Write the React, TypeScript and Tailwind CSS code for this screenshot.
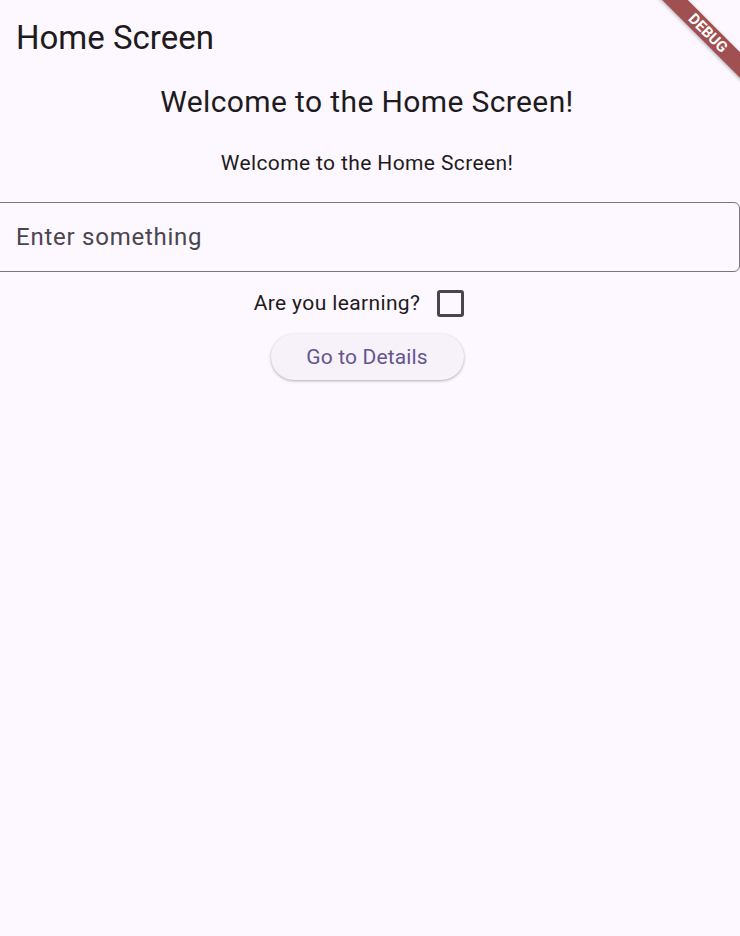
import React, { useState } from "react";

// flutter-style debug ribbon in the top right corner
const DebugBanner = () => (
  <div className="pointer-events-none absolute top-0 right-0 h-[100px] w-[100px] overflow-hidden">
    <div className="absolute top-[23.5px] left-[2.5px] flex h-[18px] w-[130px] rotate-45 items-center justify-center bg-[#a05050] shadow-[0_1px_4px_rgba(0,0,0,0.3)]">
      <span className="font-['Roboto',sans-serif] text-[15px] font-bold leading-none text-white">
        DEBUG
      </span>
    </div>
  </div>
);

export default function App() {
  const [learning, setLearning] = useState(false);
  const [value, setValue] = useState("");

  return (
    <div className="relative min-h-[936px] w-full overflow-hidden bg-[#fdf7ff] font-['Roboto',sans-serif] text-[#1d1b20]">
      <DebugBanner />
      <header className="flex h-[74px] items-center px-4">
        <h1 className="text-[33px] leading-none">Home Screen</h1>
      </header>

      <main className="flex flex-col items-center pr-[6px]">
        <p className="mt-[10px] text-[30px] leading-[36px] tracking-[0.375px]">
          Welcome to the Home Screen!
        </p>
        <p className="mt-[29px] text-[21px] leading-[28px] tracking-[0.375px]">
          Welcome to the Home Screen!
        </p>

        <div className="mt-[25px] ml-[-8px] h-[70px] w-[748px] self-start">
          <input
            value={value}
            onChange={(e) => setValue(e.target.value)}
            placeholder="Enter something"
            className="h-full w-full rounded-[6px] border-[1.5px] border-[#79747e] bg-transparent pr-[16px] pl-[23px] text-[24px] tracking-[0.75px] text-[#1d1b20] outline-none placeholder:text-[#49454f]"
          />
        </div>

        <div className="mt-[18px] flex h-[27px] items-center">
          <span className="text-[21px] tracking-[0.375px]">Are you learning?</span>
          <div className="flex w-[60px] pl-[17px]">
            <button
              onClick={() => setLearning((l) => !l)}
              className={
                learning
                  ? "h-[27px] w-[27px] rounded-[3px] border-[3px] border-[#65558f] bg-[#65558f]"
                  : "h-[27px] w-[27px] rounded-[3px] border-[3px] border-[#49454f]"
              }
            />
          </div>
        </div>

        <button className="mt-[17px] h-[46px] w-[193px] rounded-full bg-[#f7f2fa] pt-[2px] text-[21px] tracking-[0.15px] text-[#65558f] shadow-[0_1px_3px_rgba(0,0,0,0.3)]">
          Go to Details
        </button>
      </main>
    </div>
  );
}
